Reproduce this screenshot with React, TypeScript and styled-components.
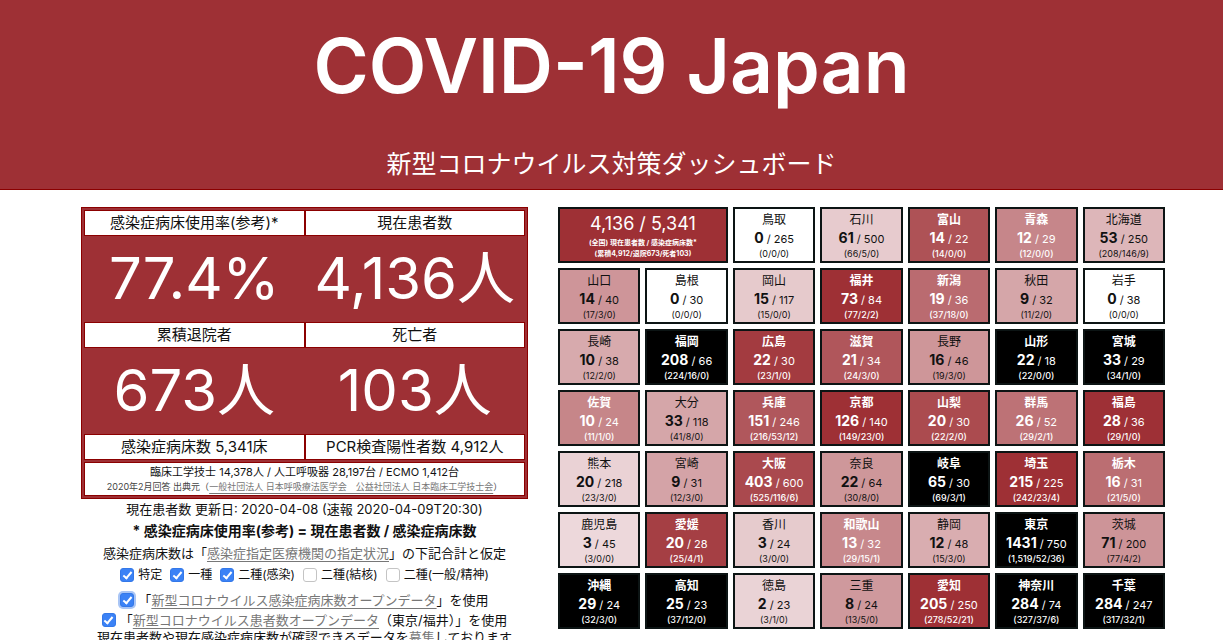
import React from "react";
import styled, { createGlobalStyle, css } from "styled-components";

const RED = "#9e3035";
const EDGE = "#8b0000";

const GlobalStyle = createGlobalStyle`
  *, *::before, *::after { box-sizing: border-box; }
  body {
    margin: 0;
    background: #fff;
    color: #111;
    font-family: Inter, "Noto Sans CJK JP", sans-serif;
  }
  h1, h2, p, dl, dt, dd, ul { margin: 0; padding: 0; }
`;

const Header = styled.header`
  display: flex;
  flex-direction: column;
  align-items: center;
  gap: 42px;
  padding: 26px 16px 8px;
  background: ${RED};
  border-bottom: 1px solid ${EDGE};
  color: #fff;
`;

const Title = styled.h1`
  font-size: 75px;
  font-weight: 600;
  line-height: 80px;
`;

const Subtitle = styled.h2`
  font-size: 25px;
  font-weight: 400;
  line-height: 33px;
`;

const Main = styled.main`
  display: grid;
  grid-template-columns: minmax(0, 447fr) minmax(0, 607fr);
  align-items: start;
  gap: 30px;
  padding: 17px 58px 0 81px;
`;

const Panel = styled.section`
  display: flex;
  flex-direction: column;
  gap: 2px;
  padding: 2px;
  background: ${RED};
  border: 1px solid ${EDGE};
`;

const Pairs = styled.dl`
  display: grid;
  grid-template-columns: 1fr 1fr;
`;

const Stat = styled.div`
  display: flex;
  flex-direction: column;
`;

const Label = styled.dt`
  height: 26px;
  background: #fff;
  border: 1px solid ${EDGE};
  font-size: 15px;
  line-height: 23px;
  text-align: center;
  white-space: nowrap;
`;

const Value = styled.dd`
  height: 86px;
  color: #fff;
  font-size: 58px;
  line-height: 84px;
  text-align: center;
  white-space: nowrap;
`;

const Supply = styled.div`
  padding: 1px 0;
  background: #fff;
  border: 1px solid ${EDGE};
  text-align: center;
  white-space: nowrap;
`;

const SupplyLine = styled.p`
  font-size: 11px;
  line-height: 16px;
`;

const SourceLine = styled.p`
  color: #444;
  font-size: 9px;
  line-height: 14px;
`;

const Link = styled.a`
  color: #777;
  text-decoration: underline;
  text-underline-offset: 3px;
`;

const Notes = styled.div`
  display: flex;
  flex-direction: column;
  text-align: center;
  white-space: nowrap;
  font-size: 13px;
  line-height: 20px;
`;

const Note = styled.p`
  display: flex;
  justify-content: center;
  align-items: baseline;
`;

const Closing = styled.p`
  line-height: 14px;
`;

const Formula = styled.p`
  padding: 2px 0;
  font-size: 14px;
  font-weight: 700;
`;

const Options = styled.div`
  display: flex;
  justify-content: center;
  gap: 8px;
  padding: 2px 0 5px;
  font-size: 12px;
`;

const Option = styled.label`
  display: flex;
  align-items: center;
  justify-content: center;
  gap: 4px;
`;

const Check = styled.input.attrs({ type: "checkbox" })<{ $ring?: boolean }>`
  appearance: none;
  display: grid;
  place-items: center;
  width: 14px;
  height: 14px;
  margin: 0;
  background: #fff;
  border: 1px solid #c4c4c4;
  border-radius: 3px;
  &:checked {
    background: #3b82f6;
    border-color: #3478e8;
  }
  &:checked::after {
    content: "";
    width: 5px;
    height: 9px;
    margin-bottom: 2px;
    border: solid #fff;
    border-width: 0 2px 2px 0;
    transform: rotate(40deg);
  }
  ${(p) => p.$ring && css`box-shadow: 0 0 0 2px #a9c5f5;`}
`;

const PrefectureGrid = styled.ul`
  display: grid;
  grid-template-columns: repeat(7, minmax(0, 1fr));
  gap: 5px;
  list-style: none;
`;

const Tile = styled.li<{ $bg: string; $light: boolean; $wide?: boolean }>`
  display: flex;
  flex-direction: column;
  align-items: center;
  height: 56px;
  padding-top: 2px;
  grid-column: span ${(p) => (p.$wide ? 2 : 1)};
  background: ${(p) => p.$bg};
  border: 2px solid #0c1414;
  color: ${(p) => (p.$light ? "#fff" : "#111")};
  white-space: nowrap;
`;

const Name = styled.span<{ $bold: boolean }>`
  font-size: 12px;
  font-weight: ${(p) => (p.$bold ? 700 : 400)};
  line-height: 18px;
`;

const Count = styled.span`
  font-size: 11px;
  line-height: 18px;
`;

const Patients = styled.b`
  font-size: 14px;
  font-weight: 700;
`;

const Detail = styled.span<{ $bold?: boolean }>`
  font-size: 9px;
  font-weight: ${(p) => (p.$bold ? 500 : 400)};
  line-height: 12px;
`;

const Total = styled.span`
  font-size: 18px;
  line-height: 26px;
`;

const TotalNote = styled.span`
  font-size: 7px;
  font-weight: 700;
  line-height: 11px;
`;

type Pref = [string, number, number, string];

const ROWS: Pref[][] = [
  [["鳥取", 0, 265, "0/0/0"], ["石川", 61, 500, "66/5/0"], ["富山", 14, 22, "14/0/0"], ["青森", 12, 29, "12/0/0"], ["北海道", 53, 250, "208/146/9"]],
  [["山口", 14, 40, "17/3/0"], ["島根", 0, 30, "0/0/0"], ["岡山", 15, 117, "15/0/0"], ["福井", 73, 84, "77/2/2"], ["新潟", 19, 36, "37/18/0"], ["秋田", 9, 32, "11/2/0"], ["岩手", 0, 38, "0/0/0"]],
  [["長崎", 10, 38, "12/2/0"], ["福岡", 208, 66, "224/16/0"], ["広島", 22, 30, "23/1/0"], ["滋賀", 21, 34, "24/3/0"], ["長野", 16, 46, "19/3/0"], ["山形", 22, 18, "22/0/0"], ["宮城", 33, 29, "34/1/0"]],
  [["佐賀", 10, 24, "11/1/0"], ["大分", 33, 118, "41/8/0"], ["兵庫", 151, 246, "216/53/12"], ["京都", 126, 140, "149/23/0"], ["山梨", 20, 30, "22/2/0"], ["群馬", 26, 52, "29/2/1"], ["福島", 28, 36, "29/1/0"]],
  [["熊本", 20, 218, "23/3/0"], ["宮崎", 9, 31, "12/3/0"], ["大阪", 403, 600, "525/116/6"], ["奈良", 22, 64, "30/8/0"], ["岐阜", 65, 30, "69/3/1"], ["埼玉", 215, 225, "242/23/4"], ["栃木", 16, 31, "21/5/0"]],
  [["鹿児島", 3, 45, "3/0/0"], ["愛媛", 20, 28, "25/4/1"], ["香川", 3, 24, "3/0/0"], ["和歌山", 13, 32, "29/15/1"], ["静岡", 12, 48, "15/3/0"], ["東京", 1431, 750, "1,519/52/36"], ["茨城", 71, 200, "77/4/2"]],
  [["沖縄", 29, 24, "32/3/0"], ["高知", 25, 23, "37/12/0"], ["徳島", 2, 23, "3/1/0"], ["三重", 8, 24, "13/5/0"], ["愛知", 205, 250, "278/52/21"], ["神奈川", 284, 74, "327/37/6"], ["千葉", 284, 247, "317/32/1"]],
];

// Empty beds are white, overflow is black, anything between deepens to red.
function tileColor(ratio: number) {
  if (ratio === 0) return "#fff";
  if (ratio >= 1) return "#000";
  const r = Math.min(ratio, 0.78);
  return `rgb(${Math.round(244 - 110 * r)}, ${Math.round(232 - 236 * r)}, ${Math.round(234 - 232 * r)})`;
}

function PrefTile({ pref }: { pref: Pref }) {
  const [name, patients, beds, detail] = pref;
  const ratio = patients / beds;
  const light = ratio >= 0.4;
  return (
    <Tile $bg={tileColor(ratio)} $light={light}>
      <Name $bold={light}>{name}</Name>
      <Count>
        <Patients>{patients}</Patients> / {beds}
      </Count>
      <Detail $bold={light}>({detail})</Detail>
    </Tile>
  );
}

const STATS = [
  ["感染症病床使用率(参考)*", "77.4%"],
  ["現在患者数", "4,136人"],
  ["累積退院者", "673人"],
  ["死亡者", "103人"],
  ["感染症病床数 5,341床", ""],
  ["PCR検査陽性者数 4,912人", ""],
];

const BED_TYPES: [string, boolean][] = [
  ["特定", true],
  ["一種", true],
  ["二種(感染)", true],
  ["二種(結核)", false],
  ["二種(一般/精神)", false],
];

export default function App() {
  return (
    <>
      <GlobalStyle />
      <Header>
        <Title>COVID-19 Japan</Title>
        <Subtitle>新型コロナウイルス対策ダッシュボード</Subtitle>
      </Header>
      <Main>
        <div>
          <Panel>
            <Pairs>
              {STATS.map(([label, value]) => (
                <Stat key={label}>
                  <Label>{label}</Label>
                  {value && <Value>{value}</Value>}
                </Stat>
              ))}
            </Pairs>
            <Supply>
              <SupplyLine>臨床工学技士 14,378人 / 人工呼吸器 28,197台 / ECMO 1,412台</SupplyLine>
              <SourceLine>
                2020年2月回答 出典元（<Link href="#source">一般社団法人 日本呼吸療法医学会　公益社団法人 日本臨床工学技士会</Link>）
              </SourceLine>
            </Supply>
          </Panel>
          <Notes>
            <p>現在患者数 更新日: 2020-04-08 (速報 2020-04-09T20:30)</p>
            <Formula>* 感染症病床使用率(参考) = 現在患者数 / 感染症病床数</Formula>
            <Note>
              感染症病床数は「<Link href="#designated">感染症指定医療機関の指定状況</Link>」の下記合計と仮定
            </Note>
            <Options>
              {BED_TYPES.map(([label, on]) => (
                <Option key={label}>
                  <Check defaultChecked={on} />
                  {label}
                </Option>
              ))}
            </Options>
            <Option>
              <Check defaultChecked $ring />
              <span>
                「<Link href="#beds">新型コロナウイルス感染症病床数オープンデータ</Link>」を使用
              </span>
            </Option>
            <Option>
              <Check defaultChecked />
              <span>
                「<Link href="#patients">新型コロナウイルス患者数オープンデータ</Link>（東京/福井）」を使用
              </span>
            </Option>
            <Closing>
              現在患者数や現在感染症病床数が確認できるデータを<Link href="#wanted">募集</Link>しております
            </Closing>
          </Notes>
        </div>
        <PrefectureGrid>
          <Tile $bg={RED} $light $wide>
            <Total>4,136 / 5,341</Total>
            <TotalNote>(全国) 現在患者数 / 感染症病床数*</TotalNote>
            <TotalNote>(累積4,912/退院673/死者103)</TotalNote>
          </Tile>
          {ROWS.flat().map((pref) => (
            <PrefTile key={pref[0]} pref={pref} />
          ))}
        </PrefectureGrid>
      </Main>
    </>
  );
}
